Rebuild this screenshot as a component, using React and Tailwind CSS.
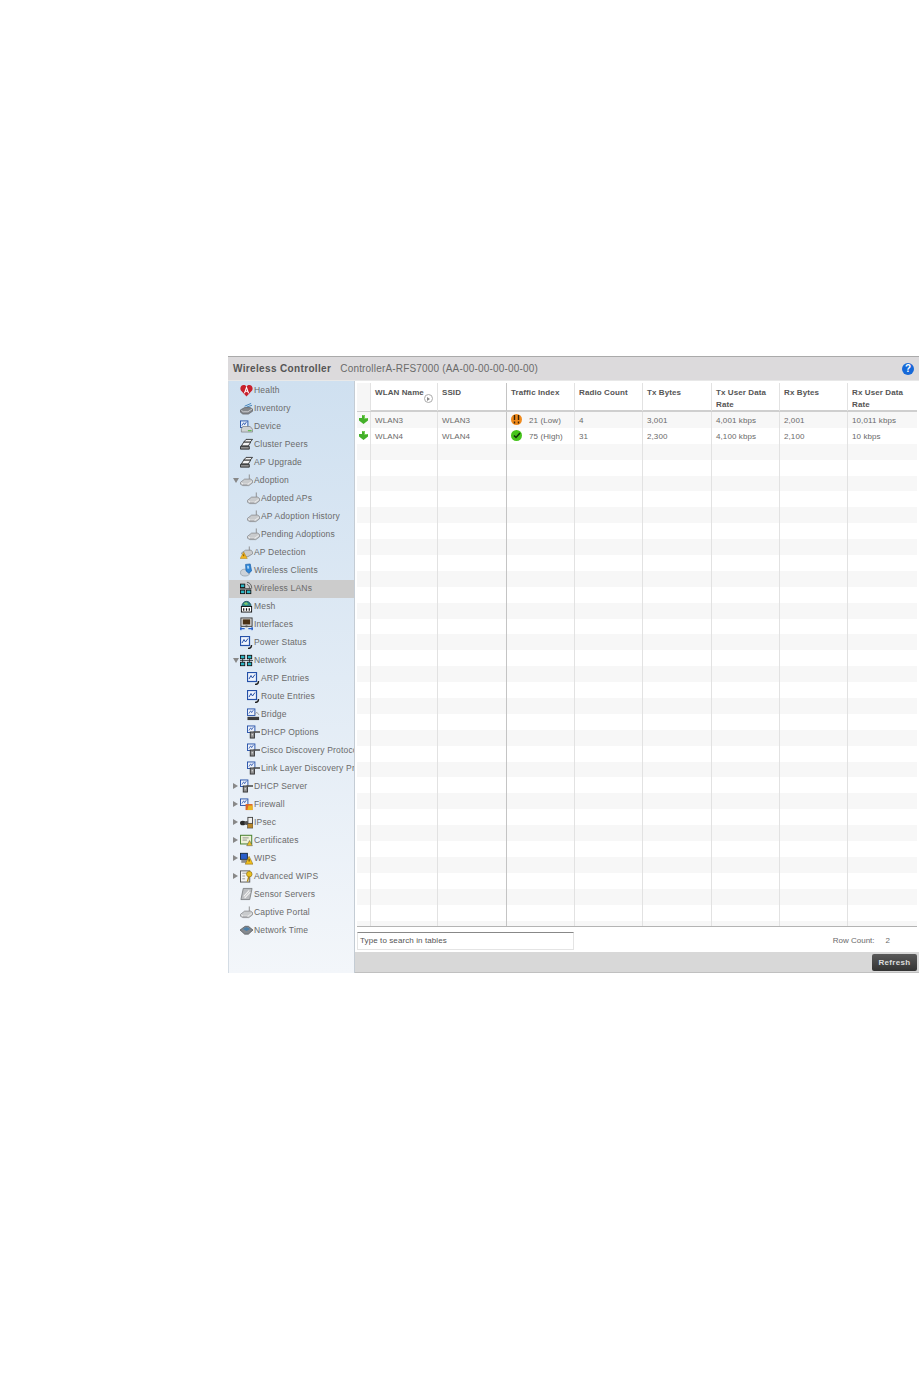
import React from 'react'

const font = "font-['Liberation_Sans',sans-serif]"

function Ap() {
	return (
		<svg width="14" height="13" viewBox="0 0 14 13">
			<path d="M10 0v6" stroke="#8a8a8a" strokeWidth="1" />
			<path d="M.5 8.500l4.500-3.500h6.500l2 1.500v2.500l-4 3H3L.5 10.500z" fill="#c9cbcd" stroke="#85878a" strokeWidth="0.8" />
			<path d="M1.500 9l2 1.500h5l4-3" fill="none" stroke="#f2f2f2" strokeWidth="1" />
			<path d="M3 11h5" stroke="#97999c" strokeWidth="0.8" />
		</svg>
	)
}

function Heart() {
	return (
		<svg width="14" height="13" viewBox="0 0 14 13">
			<path d="M7 13L1 6.500C-.5 4 1 .5 4 .5c1.400 0 2.400.7 3 1.700C7.600 1.200 8.600.5 10 .5c3 0 4.500 3.500 3 6z" fill="#c8202c" />
			<path d="M4.800 9.500L7 3l2.200 6.500M5.800 7.300h2.400" fill="none" stroke="#fff" strokeWidth="1.100" />
		</svg>
	)
}

function Inventory() {
	return (
		<svg width="14" height="13" viewBox="0 0 14 13">
			<path d="M5 4l7-3M7 5l6-2" stroke="#3f7fb8" strokeWidth="1" />
			<path d="M.5 8l4.500-2.500h6l2.500 1.500v2.500l-4.500 3H3L.5 10.500z" fill="#85888c" stroke="#55575a" strokeWidth="0.7" />
			<path d="M1.500 8.500l2 1.500h5l4.500-3" fill="none" stroke="#d8dadc" strokeWidth="0.9" />
		</svg>
	)
}

function Device() {
	return (
		<svg width="14" height="13" viewBox="0 0 14 13">
			<rect x="0.500" y="0.500" width="8" height="7" fill="#e8eefa" stroke="#2450a8" />
			<path d="M2 5.500l2-3 1 2 2-3" fill="none" stroke="#2450a8" strokeWidth="0.9" />
			<path d="M3 6.500h8l2.500 3v3H1.500V9z" fill="#cfd1d3" stroke="#77797c" strokeWidth="0.7" />
			<path d="M8.500 11h4" stroke="#58b848" strokeWidth="1.200" />
		</svg>
	)
}

function Cluster() {
	return (
		<svg width="14" height="13" viewBox="0 0 14 13">
			<path d="M4 4l2.500-3h7L11 4z" fill="#efefef" stroke="#222" strokeWidth="0.9" />
			<path d="M1.500 8l2.500-4h7.500L9 8z" fill="#f4f4f4" stroke="#222" strokeWidth="0.9" />
			<path d="M.5 8.500h9.500v3H.5z" fill="#8f8f8f" stroke="#222" strokeWidth="0.9" />
		</svg>
	)
}

function Detect() {
	return (
		<svg width="14" height="13" viewBox="0 0 14 13">
			<path d="M10 0v5" stroke="#8a8a8a" />
			<path d="M1.500 7l4.500-3h6l1.500 2v2l-5 3H4z" fill="#c9cbcd" stroke="#85878a" strokeWidth="0.8" />
			<path d="M4 6l3.800 7H.2z" fill="#f3b51c" stroke="#a87a10" strokeWidth="0.5" />
			<path d="M4 8.500v2" stroke="#5a3a00" strokeWidth="0.9" />
		</svg>
	)
}

function Clients() {
	return (
		<svg width="14" height="14" viewBox="0 0 14 14">
			<ellipse cx="5.500" cy="9.800" rx="5" ry="3.700" fill="#cbd2d9" stroke="#8a96a3" strokeWidth="0.7" />
			<path d="M6 1l5-.5 1.500 7.500-3 2.500L6.500 8z" fill="#2f86d6" stroke="#1a5fa8" strokeWidth="0.7" />
			<path d="M7.500 2.500l2 -.2.500 3-2 .3z" fill="#a8d4f8" />
		</svg>
	)
}

function Network() {
	return (
		<svg width="15" height="13" viewBox="0 0 15 13">
			<rect x="0.500" y="0.500" width="5" height="4" fill="#2ab4c4" stroke="#111" />
			<rect x="8.500" y="0.500" width="5" height="4" fill="#2ab4c4" stroke="#111" />
			<rect x="0.500" y="8.500" width="5" height="4" fill="#2ab4c4" stroke="#111" />
			<rect x="8.500" y="8.500" width="5" height="4" fill="#2ab4c4" stroke="#111" />
			<path d="M0 6.500h15M3 4.500v4M11 4.500v4" stroke="#111" strokeWidth="0.800" />
		</svg>
	)
}

function Wlan() {
	return (
		<svg width="15" height="14" viewBox="0 0 15 14">
			<rect x="0.500" y="2.500" width="5" height="4" fill="#2ab4c4" stroke="#111" />
			<rect x="0.500" y="9.500" width="5" height="4" fill="#2ab4c4" stroke="#111" />
			<rect x="7.500" y="9.500" width="5" height="4" fill="#2ab4c4" stroke="#111" />
			<path d="M0 8h13" stroke="#111" />
			<path d="M8 .5c3.200 0 5.500 3 5.500 7M8 3c1.800 0 3 2 3 4.500" fill="none" stroke="#444" strokeWidth="0.9" />
		</svg>
	)
}

function Mesh() {
	return (
		<svg width="14" height="14" viewBox="0 0 14 14">
			<path d="M2 7.500a5 5.500 0 0 1 10 0z" fill="#2d8a8a" stroke="#134" strokeWidth="0.7" />
			<path d="M4 4l3-1 2 2-3 1z" fill="#7fc86a" />
			<rect x="1.500" y="7.500" width="11" height="6" fill="#fff" stroke="#111" />
			<path d="M4 9.500v2.500M7 9.500v2.500M10 9.500v2.500" stroke="#111" strokeWidth="1.300" />
		</svg>
	)
}

function Interfaces() {
	return (
		<svg width="14" height="14" viewBox="0 0 14 14">
			<rect x="1" y="0.500" width="12" height="9" fill="#dcdcdc" stroke="#333" />
			<rect x="3" y="2" width="8" height="5.500" fill="#4a3014" />
			<path d="M6 8.500h2v2H6z" fill="#555" />
			<path d="M0 12h5M9 12h5M1.500 10.500L0 12l1.500 1.500M12.500 10.500L14 12l-1.500 1.500" fill="none" stroke="#2a62c8" strokeWidth="1.200" />
		</svg>
	)
}

function Chart() {
	return (
		<svg width="13" height="13" viewBox="0 0 13 13">
			<rect x="0.500" y="0.500" width="9" height="9" fill="#eef3fc" stroke="#2450a8" strokeWidth="1.200" />
			<path d="M2 7l2-3.500L5.500 6 8 2.500" fill="none" stroke="#2450a8" strokeWidth="1" />
			<path d="M8 12.500c2.200 0 3.500-1.200 3.500-3.500" fill="none" stroke="#222" strokeWidth="1.400" />
		</svg>
	)
}

function Bridge() {
	return (
		<svg width="14" height="13" viewBox="0 0 14 13">
			<rect x="0.500" y="0.500" width="8" height="7" fill="#eef3fc" stroke="#2450a8" />
			<path d="M2 5.500l2-3 1 2 2-3" fill="none" stroke="#2450a8" strokeWidth="0.8" />
			<path d="M.5 9h12.500v3.500H.5z" fill="#3c3c3c" />
			<path d="M8 7l2.500-3L13 7" fill="none" stroke="#999" />
		</svg>
	)
}

function Dhcp() {
	return (
		<svg width="14" height="14" viewBox="0 0 14 14">
			<rect x="0.500" y="0.500" width="8" height="7" fill="#eef3fc" stroke="#2450a8" />
			<path d="M2 5.500l2-3 1 2 2-3" fill="none" stroke="#2450a8" strokeWidth="0.8" />
			<rect x="3.500" y="7" width="4.500" height="6.500" fill="#8f8f8f" stroke="#333" />
			<path d="M5 10h1.500" stroke="#eee" />
			<path d="M7 7h7" stroke="#555" strokeWidth="1.800" />
		</svg>
	)
}

function Firewall() {
	return (
		<svg width="14" height="13" viewBox="0 0 14 13">
			<rect x="0.500" y="0.500" width="8" height="7" fill="#eef3fc" stroke="#2450a8" />
			<path d="M2 5.500l2-3 1 2 2-3" fill="none" stroke="#2450a8" strokeWidth="0.8" />
			<rect x="6" y="6" width="7.500" height="6.500" fill="#d9662a" />
			<path d="M9 7.500h4.500v5H8z" fill="#e8b820" />
		</svg>
	)
}

function Ipsec() {
	return (
		<svg width="14" height="13" viewBox="0 0 14 13">
			<ellipse cx="3" cy="7" rx="3" ry="2.500" fill="#2a2a2a" />
			<ellipse cx="7" cy="7" rx="2.500" ry="2.200" fill="#555" />
			<rect x="8.500" y="1" width="5" height="6.500" fill="#eee" stroke="#444" />
			<rect x="8" y="7.500" width="6" height="5" fill="#b8862a" stroke="#444" strokeWidth="0.6" />
		</svg>
	)
}

function Cert() {
	return (
		<svg width="15" height="13" viewBox="0 0 15 13">
			<rect x="0.500" y="0.500" width="13" height="10" fill="#eef2d8" stroke="#4f8436" strokeWidth="1.200" />
			<path d="M3 3.500h7M3 6h5" stroke="#888" />
			<path d="M11 6.500l3.300 6H7.700z" fill="#e8c020" stroke="#555" strokeWidth="0.6" />
		</svg>
	)
}

function Wips() {
	return (
		<svg width="15" height="13" viewBox="0 0 15 13">
			<rect x="0.500" y="0.500" width="8" height="7" fill="#2a5ec8" stroke="#123" />
			<rect x="1.500" y="8" width="6.500" height="3.500" fill="#8f8f8f" />
			<path d="M10.500 4L15 13H6z" fill="#f3c01c" stroke="#806010" strokeWidth="0.6" />
			<path d="M10.500 7v3" stroke="#3a2a00" />
		</svg>
	)
}

function AdvWips() {
	return (
		<svg width="14" height="14" viewBox="0 0 14 14">
			<rect x="0.500" y="1.500" width="10" height="12" fill="#f4f4f4" stroke="#555" />
			<path d="M2.500 4h6M2.500 7h3M2.500 10h3" stroke="#999" />
			<circle cx="10" cy="5" r="3" fill="#e8c020" stroke="#806010" strokeWidth="0.6" />
			<path d="M9.500 7.500L8 13" stroke="#b08a10" strokeWidth="1.500" />
		</svg>
	)
}

function Sensor() {
	return (
		<svg width="14" height="14" viewBox="0 0 14 14">
			<path d="M3.500 1H13l-2.500 12H1z" fill="#bcbec1" stroke="#6f7174" strokeWidth="0.8" />
			<path d="M4 9.500l6-6.500M5 11.500l6-6.500" stroke="#f4f4f4" strokeWidth="1.100" />
		</svg>
	)
}

function Time() {
	return (
		<svg width="14" height="12" viewBox="0 0 14 12">
			<path d="M0 6l5.500-4h3.500l5 4-5 4.500H5z" fill="#85898e" stroke="#4a4c4f" strokeWidth="0.7" />
			<path d="M3 5l4-2.200L11 5 7 7.200z" fill="#4a7ea8" />
		</svg>
	)
}

const navItems = [
	{ label: 'Health', icon: Heart },
	{ label: 'Inventory', icon: Inventory },
	{ label: 'Device', icon: Device },
	{ label: 'Cluster Peers', icon: Cluster },
	{ label: 'AP Upgrade', icon: Cluster },
	{ label: 'Adoption', icon: Ap, arrow: 'open' },
	{ label: 'Adopted APs', icon: Ap, child: true },
	{ label: 'AP Adoption History', icon: Ap, child: true },
	{ label: 'Pending Adoptions', icon: Ap, child: true },
	{ label: 'AP Detection', icon: Detect },
	{ label: 'Wireless Clients', icon: Clients },
	{ label: 'Wireless LANs', icon: Wlan, selected: true },
	{ label: 'Mesh', icon: Mesh },
	{ label: 'Interfaces', icon: Interfaces },
	{ label: 'Power Status', icon: Chart },
	{ label: 'Network', icon: Network, arrow: 'open' },
	{ label: 'ARP Entries', icon: Chart, child: true },
	{ label: 'Route Entries', icon: Chart, child: true },
	{ label: 'Bridge', icon: Bridge, child: true },
	{ label: 'DHCP Options', icon: Dhcp, child: true },
	{ label: 'Cisco Discovery Protocol', icon: Dhcp, child: true },
	{ label: 'Link Layer Discovery Protocol', icon: Dhcp, child: true },
	{ label: 'DHCP Server', icon: Dhcp, arrow: 'closed' },
	{ label: 'Firewall', icon: Firewall, arrow: 'closed' },
	{ label: 'IPsec', icon: Ipsec, arrow: 'closed' },
	{ label: 'Certificates', icon: Cert, arrow: 'closed' },
	{ label: 'WIPS', icon: Wips, arrow: 'closed' },
	{ label: 'Advanced WIPS', icon: AdvWips, arrow: 'closed' },
	{ label: 'Sensor Servers', icon: Sensor },
	{ label: 'Captive Portal', icon: Ap },
	{ label: 'Network Time', icon: Time },
]

function NavRow({ item }) {
	const Icon = item.icon
	return (
		<div
			className={`flex h-[18px] items-center overflow-hidden whitespace-nowrap pb-[2px] ${item.selected ? 'bg-[#cccccc]' : ''} ${item.child ? 'pl-[18px]' : 'pl-[4px]'}`}
		>
			{!item.child && (
				<span className="flex w-[7px] shrink-0 items-center">
					{item.arrow === 'open' && (
						<span className="h-0 w-0 border-x-[3px] border-t-[5px] border-x-transparent border-t-[#888]" />
					)}
					{item.arrow === 'closed' && (
						<span className="h-0 w-0 border-y-[3px] border-l-[5px] border-y-transparent border-l-[#888]" />
					)}
				</span>
			)}
			<span className="flex w-[13px] shrink-0 items-center">
				<Icon />
			</span>
			<span className="pl-[1px] text-[8.500px] leading-none tracking-[0.18px] text-[#6a6a6a]">{item.label}</span>
		</div>
	)
}

const columns = [
	{ title: '' },
	{ title: 'WLAN Name', sort: true },
	{ title: 'SSID' },
	{ title: 'Traffic Index' },
	{ title: 'Radio Count' },
	{ title: 'Tx Bytes' },
	{ title: 'Tx User Data Rate' },
	{ title: 'Rx Bytes' },
	{ title: 'Rx User Data Rate' },
]

const gridCols = 'grid-cols-[14px_67px_69px_68px_68px_69px_68px_68px_69px]'

const rows = [
	['WLAN3', 'WLAN3', 'low', '4', '3,001', '4,001 kbps', '2,001', '10,011 kbps'],
	['WLAN4', 'WLAN4', 'high', '31', '2,300', '4,100 kbps', '2,100', '10 kbps'],
]

function LowBadge() {
	return (
		<span className="flex h-[11px] w-[11px] items-center justify-center rounded-full bg-[#f08a1c]">
			<svg width="7" height="9" viewBox="0 0 7 9">
				<path d="M1.500 0v5M5.500 0v5M1.500 6.500v2M5.500 6.500v2" stroke="#3a2408" strokeWidth="1.400" />
			</svg>
		</span>
	)
}

function HighBadge() {
	return (
		<span className="flex h-[11px] w-[11px] items-center justify-center rounded-full bg-[#46c41c]">
			<svg width="8" height="7" viewBox="0 0 8 7">
				<path d="M1 3.500l2 2 4-4.500" fill="none" stroke="#10300a" strokeWidth="1.500" />
			</svg>
		</span>
	)
}

function GreenPlus() {
	return (
		<svg width="9" height="9" viewBox="0 0 9 9">
			<path d="M3 0h3v3h3v2.500L4.500 9 0 5.500V3h3z" fill="#44b02a" />
			<path d="M3.500 .5h2v3h3" fill="none" stroke="#8fe070" strokeWidth="0.700" />
		</svg>
	)
}

function cellBorder(i) {
	if (i === 8) return ''
	if (i === 2) return 'border-r border-r-[#c4c4c4]'
	return 'border-r border-r-[#e2e2e2]'
}

function DataRow({ row, index }) {
	const cells = row || ['', '', '', '', '', '', '', '']
	return (
		<div className={`grid h-[15.900px] ${gridCols} ${index % 2 === 0 ? 'bg-[#f7f7f7]' : 'bg-white'}`}>
			<div className={`flex items-center pl-[2px] ${cellBorder(0)}`}>{row && <GreenPlus />}</div>
			{cells.map((cell, i) => (
				<div
					key={i}
					className={`flex items-center overflow-hidden whitespace-nowrap pl-[4px] pt-[2px] text-[8px] tracking-[0.1px] text-[#6a6a6a] ${cellBorder(i + 1)}`}
				>
					{cell === 'low' && (
						<span className="flex items-center gap-[7px]">
							<span className="-mt-[2px]"><LowBadge /></span>
							21 (Low)
						</span>
					)}
					{cell === 'high' && (
						<span className="flex items-center gap-[7px]">
							<span className="-mt-[2px]"><HighBadge /></span>
							75 (High)
						</span>
					)}
					{cell !== 'low' && cell !== 'high' && cell}
				</div>
			))}
		</div>
	)
}

function DataTable() {
	const blanks = Array.from({ length: 31 })
	return (
		<div className="mx-[2px] mt-[2px] h-[544px] w-[560px] overflow-hidden border-b border-b-[#b4b4b4]">
			<div className={`grid h-[29px] ${gridCols} border-b-2 border-b-[#cfcfcf] bg-white`}>
				{columns.map((col, i) => (
					<div
						key={i}
						className={`relative px-[4px] pt-[4px] text-[8px] font-bold leading-[12px] tracking-[0.1px] text-[#555] ${i === 0 ? 'bg-[#f6f6f6]' : ''} ${cellBorder(i)}`}
					>
						{col.title}
						{col.sort && (
							<span className="absolute right-[4px] top-[11px] flex h-[9px] w-[9px] items-center justify-center rounded-full border border-[#aaa]">
								<span className="h-0 w-0 border-y-2 border-l-[3px] border-y-transparent border-l-[#888]" />
							</span>
						)}
					</div>
				))}
			</div>
			{rows.map((row, i) => (
				<DataRow key={i} row={row} index={i} />
			))}
			{blanks.map((_, i) => (
				<DataRow key={i} index={i + 2} />
			))}
		</div>
	)
}

export default function App() {
	return (
		<div className={`h-[1385px] w-[919px] bg-white pl-[228px] pt-[356px] ${font}`}>
			<div className="flex h-[617px] w-[691px] flex-col border-t border-t-[#aaaaaa]">
				<div className="flex h-[24px] shrink-0 items-center justify-between border-b border-b-[#e8e8e8] bg-[#dcdadc] pl-[5px] pr-[5px]">
					<div className="flex items-center gap-[9px]">
						<span className="text-[10px] font-bold tracking-[0.35px] text-[#555]">Wireless Controller</span>
						<span className="text-[10px] tracking-[0.18px] text-[#6a6a6a]">ControllerA-RFS7000 (AA-00-00-00-00-00)</span>
					</div>
					<span className="flex h-[12px] w-[12px] items-center justify-center rounded-full bg-[#1668d8] text-[10px] font-bold leading-none text-white">
						?
					</span>
				</div>
				<div className="flex min-h-0 flex-1">
					<div className="w-[127px] shrink-0 border-x border-l-[#d4dce4] border-r-[#c4ccd4] bg-gradient-to-b from-[#cfe0f0] to-[#f3f6fa] pt-[1px]">
						{navItems.map((item) => (
							<NavRow key={item.label} item={item} />
						))}
					</div>
					<div className="flex min-w-0 flex-1 flex-col">
						<DataTable />
						<div className="flex h-[25px] items-center justify-between pl-[2px] pr-[29px] pt-[3px] text-[8px] text-[#6a6a6a]">
							<div className="flex h-[18px] w-[217px] items-center border border-[#e4e4e4] border-t-[#888] pl-[2px] tracking-[0.1px] text-[#555]">
								Type to search in tables
							</div>
							<div className="flex gap-[11px] pb-[1px]">
								<span>Row Count:</span>
								<span>2</span>
							</div>
						</div>
						<div className="flex flex-1 items-center justify-end border-b border-b-[#c0c0c0] bg-[#d8d8d8] pr-[2px] pt-[1px]">
							<button className="h-[17px] w-[45px] rounded-[2px] bg-gradient-to-b from-[#5a5a5a] to-[#333] text-[8px] font-bold tracking-[0.3px] text-[#ddd]">
								Refresh
							</button>
						</div>
					</div>
				</div>
			</div>
		</div>
	)
}
